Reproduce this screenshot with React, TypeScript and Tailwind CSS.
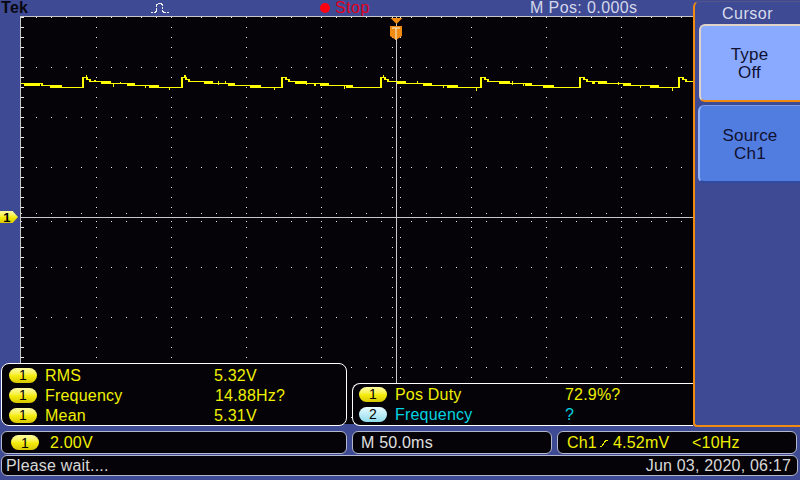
const PERIODS = [83, 182, 282, 381, 481, 580, 679];
const STEPS = [
  [7, 27, 50, 75],
  [8, 30, 52, 78],
  [8, 23, 46, 70],
  [9, 24, 50, 76],
  [8, 28, 50, 72],
  [9, 26, 50, 78],
];
// thick bits and spikes along the trace, as offsets from each rising edge
const NOISE = [
  [[18, 9, 81, 3], [30, 1, 84, 3], [37, 1, 82, 2], [44, 8, 83, 3], [62, 1, 85, 3], [66, 9, 85, 3], [86, 1, 87, 3], [11, 2, 80, 2]],
  [[22, 8, 81, 3], [36, 1, 81, 4], [43, 1, 81, 3], [46, 6, 83, 3], [68, 10, 85, 3], [92, 1, 87, 3], [2, 2, 75, 3]],
  [[13, 10, 81, 3], [24, 1, 81, 4], [32, 2, 83, 3], [38, 8, 83, 3], [46, 1, 83, 3], [62, 1, 85, 4], [64, 6, 85, 3]],
  [[16, 8, 81, 3], [36, 1, 81, 3], [42, 8, 83, 3], [62, 1, 85, 3], [66, 10, 85, 3], [95, 1, 87, 4]],
  [[18, 10, 81, 3], [31, 1, 81, 4], [42, 1, 83, 3], [44, 6, 83, 3], [66, 1, 85, 3], [62, 10, 85, 3]],
  [[12, 3, 81, 3], [18, 7, 81, 3], [38, 1, 82, 3], [43, 7, 83, 3], [60, 1, 85, 3], [70, 8, 85, 3], [92, 1, 87, 4]],
];

function tracePath(): string {
  let d = 'M21 83.5H42V85.5H60V87.5';
  PERIODS.forEach((x0, i) => {
    d += `H${x0}V77.5H${x0 + 4}V79.5H${x0 + 7}`;
    const steps = STEPS[i];
    if (!steps) {
      d += 'V81.5H693';
      return;
    }
    d += `V81.5H${x0 + steps[1]}V83.5H${x0 + steps[2]}V85.5H${x0 + steps[3]}V87.5`;
  });
  return d;
}

function Graticule() {
  const dots: { x: number; y: number }[] = [];
  for (let row = 17; row <= 417; row += 50) {
    for (let x = 21; x < 693; x += 15) dots.push({ x, y: row });
  }
  for (let col = 21; col < 693; col += 75) {
    for (let y = 17; y < 425; y += 10) dots.push({ x: col, y });
  }
  // denser dots either side of the centre lines
  for (let x = 21; x < 693; x += 15) {
    dots.push({ x, y: 213 }, { x, y: 221 });
  }
  for (let y = 17; y < 425; y += 10) {
    dots.push({ x: 392, y }, { x: 400, y });
  }
  return (
    <g fill="#e8e8e8">
      {dots.map((d, i) => (
        <rect key={i} x={d.x} y={d.y} width="1" height="1" />
      ))}
      {Array.from({ length: 41 }, (_, i) => (
        <rect key={i} x="21" y={17 + i * 10} width="3" height="1" />
      ))}
    </g>
  );
}

function Plot() {
  return (
    <svg viewBox="20 16 673 408" className="block w-[673px] h-[408px]" shapeRendering="crispEdges">
      <rect x="20" y="16" width="673" height="408" fill="#050308" />
      <Graticule />
      <rect x="20" y="16" width="673" height="1" fill="#c8c8c8" />
      <rect x="20" y="16" width="1" height="408" fill="#c8c8c8" />
      <rect x="396" y="17" width="1" height="408" fill="#c8c8c8" />
      <rect x="21" y="217" width="672" height="1" fill="#c8c8c8" />
      <path d={tracePath()} fill="none" stroke="#ffff00" strokeWidth="1.5" />
      <g fill="#ffff00">
        {PERIODS.slice(0, 6).map((x0, i) =>
          NOISE[i].map(([dx, w, y, h], j) => (
            <rect key={`${i}-${j}`} x={x0 + dx} y={y} width={w} height={h} />
          )),
        )}
        <rect x="24" y="83" width="16" height="3" />
        <rect x="50" y="85" width="12" height="3" />
        <rect x="86" y="75" width="1" height="3" />
        <rect x="383" y="75" width="1" height="3" />
      </g>
      <g shapeRendering="auto">
        <path d="M390.5 18H402.5L396.5 24Z" fill="#f08a10" />
        <path d="M390 26H402V36L396 40L390 36Z" fill="#f08a10" />
        <path d="M392 28H400M396 28V40" stroke="#f4f0e0" strokeWidth="1" fill="none" />
      </g>
    </svg>
  );
}

function ChannelPill({ n, cyan }: { n: string; cyan?: boolean }) {
  return (
    <span
      className={`flex h-[15px] w-[28px] shrink-0 items-center justify-center rounded-full text-[14px] leading-none text-black ${
        cyan ? 'bg-gradient-to-b from-[#e8fbff] to-[#8fdcec]' : 'bg-gradient-to-b from-[#fffca0] via-[#f6ee10] to-[#d8c800]'
      }`}
    >
      {n}
    </span>
  );
}

function MeasureRow({
  label,
  value,
  n,
  labelWidth,
  cyan,
}: {
  label: string;
  value: string;
  n: string;
  labelWidth: string;
  cyan?: boolean;
}) {
  return (
    <div className={`flex h-5 items-center ${cyan ? 'text-[#00d4e0]' : 'text-[#f0f000]'}`}>
      <ChannelPill n={n} cyan={cyan} />
      <span className={`ml-2 pt-px ${labelWidth}`}>{label}</span>
      <span className="pt-px">{value}</span>
    </div>
  );
}

export default function App() {
  return (
    <div
      className="flex h-[480px] w-[800px] flex-col overflow-hidden bg-[#3f4a95] text-[16px] tracking-[0.2px]"
      style={{ fontFamily: '"Liberation Sans", Arial, sans-serif' }}
    >
      <div className="flex h-[427px]">
        <div className="relative w-[693px]">
          <header className="flex h-4 items-center leading-none">
            <span className="ml-px w-[150px] text-[16px] font-bold tracking-[0.3px] text-[#080810]">Tek</span>
            <svg width="18" height="12" viewBox="0 0 18 12" className="shrink-0" shapeRendering="crispEdges">
              <path
                d="M0 10.5H4V9.5H5V2.5H6V1.5H10V2.5H11V9.5H12V10.5H18"
                fill="none"
                stroke="#f0f0f0"
                strokeWidth="1"
                strokeDasharray="2 0.6"
              />
            </svg>
            <span className="ml-[151px] h-[10px] w-[10px] shrink-0 rounded-full bg-[#ff0010]" />
            <span className="ml-[5px] w-[195px] text-[16px] tracking-[0.5px] text-[#e00020]">Stop</span>
            <span className="text-[16px] tracking-[0.4px] text-[#d4d8ea]">M Pos: 0.000s</span>
          </header>
          <div className="flex">
            <div className="relative w-5">
              <span className="absolute left-0 top-[195px] flex h-3 w-[18px] items-center justify-center bg-gradient-to-b from-[#fffca0] via-[#f6ee10] to-[#d8c800] pr-1 text-[13px] leading-none font-bold text-black [clip-path:polygon(0_0,70%_0,100%_50%,70%_100%,0_100%)]">
                1
              </span>
            </div>
            <Plot />
          </div>
          <div className="absolute left-px top-[363px] h-[63px] w-[346px] rounded-lg border border-white bg-[#050308] px-[7px] pt-px">
            <MeasureRow n="1" label="RMS" value="5.32V" labelWidth="w-[169px]" />
            <MeasureRow n="1" label="Frequency" value="14.88Hz?" labelWidth="w-[170px]" />
            <MeasureRow n="1" label="Mean" value="5.31V" labelWidth="w-[169px]" />
          </div>
          <div className="absolute left-[352px] top-[383px] h-[43px] w-[341px] rounded-l-lg border-y border-l border-white bg-[#050308] pl-[6px]">
            <MeasureRow n="1" label="Pos Duty" value="72.9%?" labelWidth="w-[170px]" />
            <MeasureRow n="2" label="Frequency" value="?" labelWidth="w-[170px]" cyan />
          </div>
        </div>
        <aside className="mt-px h-[426px] w-[107px] rounded-tl-md rounded-bl-sm border-b-2 border-l-2 border-t border-b-[#f08a10] border-l-[#f08a10] border-t-[#55558a] bg-[#3f4a95]">
          <div className="flex h-[22px] items-center justify-center pt-0.5 text-[16px] tracking-[0.5px] text-[#d8dcec]">Cursor</div>
          <div className="ml-1 flex h-[78px] flex-col items-center justify-center rounded-l-md border-t-2 border-b-2 border-l-2 border-t-[#e0d4c8] border-b-[#f08a10] border-l-[#e0d4c8] bg-[#8aaaff] pt-0.5 pr-0.5 text-[17px] leading-[18px] text-[#101030]">
            <span>Type</span>
            <span>Off</span>
          </div>
          <div className="mt-[3px] ml-[3px] flex h-[78px] flex-col items-center justify-center rounded-l-md border-t border-b-2 border-l-2 border-t-[#7c9cf0] border-b-[#2f4aa0] border-l-[#8fb4fa] bg-[#527de0] pt-0.5 text-[17px] leading-[18px] text-[#101030]">
            <span>Source</span>
            <span>Ch1</span>
          </div>
        </aside>
      </div>
      <div className="mt-1 flex h-[23px] gap-[5px] pl-px">
        <div className="flex w-[346px] items-center rounded-md border border-[#b4b8cc] bg-[#050308] pl-[9px] text-[#f0f000]">
          <ChannelPill n="1" />
          <span className="ml-[11px]">2.00V</span>
        </div>
        <div className="flex w-[200px] items-center rounded-md border border-[#b4b8cc] bg-[#050308] pl-2 text-[#e0e0e0]">M 50.0ms</div>
        <div className="flex w-[240px] items-center rounded-md border border-[#b4b8cc] bg-[#050308] pl-[9px] text-[#f0f000]">
          <span className="w-[32px]">Ch1</span>
          <svg width="10" height="10" viewBox="0 0 10 10" className="shrink-0" shapeRendering="crispEdges">
            <path d="M1 8H3L7 2H9" fill="none" stroke="#f0f000" strokeWidth="1" />
          </svg>
          <span className="ml-[4px] w-[79px]">4.52mV</span>
          <span>&lt;10Hz</span>
        </div>
      </div>
      <div className="mt-px ml-px flex h-[21px] w-[797px] items-center justify-between rounded-md border border-[#b4b8cc] bg-[#050308] px-1 text-[#d8d8d8]">
        <span>Please wait....</span>
        <span className="pr-[2px]">Jun 03, 2020, 06:17</span>
      </div>
    </div>
  );
}
